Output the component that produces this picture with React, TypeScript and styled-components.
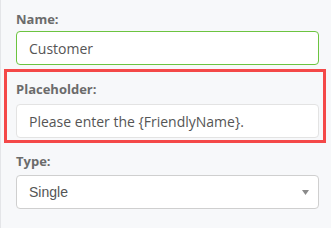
import React from 'react';
import styled, { createGlobalStyle } from 'styled-components';

const GlobalStyle = createGlobalStyle`
    html, body {
        margin: 0;
        padding: 0;
        background: #f7f8fa;
    }
    * {
        box-sizing: border-box;
    }
`;

const Panel = styled.div`
    width: 331px;
    height: 228px;
    padding: 10px 0 0 0;
    border-left: 1px solid #e4e5e8;
    background: #f7f8fa;
    font-family: 'Open Sans', 'Noto Sans', sans-serif;
    display: flex;
    flex-direction: column;
`;

const Field = styled.div<{ $highlight?: boolean; $gap: number; $top: number }>`
    display: flex;
    flex-direction: column;
    gap: ${(props) => props.$gap}px;
    margin-top: ${(props) => props.$top}px;
    margin-left: ${(props) => (props.$highlight ? 3 : 15)}px;
    margin-right: ${(props) => (props.$highlight ? 5 : 12)}px;
    padding: ${(props) => (props.$highlight ? '8px 4px 2px 9px' : '0')};
    border: ${(props) => (props.$highlight ? '3px solid #f44848' : 'none')};
`;

const Label = styled.label`
    font-size: 13px;
    line-height: 18px;
    font-weight: 700;
    color: #6b6b6b;
`;

const TextInput = styled.input<{ $accent?: boolean }>`
    width: 100%;
    height: 34px;
    padding: 0 12px;
    border: 1px solid ${(props) => (props.$accent ? '#6cc440' : '#e3e3e3')};
    border-radius: 4px;
    background: #fff;
    font-family: 'Open Sans', 'Noto Sans', sans-serif;
    font-size: 14px;
    color: #555;
    outline: none;
`;

const SelectWrap = styled.div`
    position: relative;
    width: 100%;
`;

const Select = styled.select`
    width: 100%;
    height: 34px;
    padding: 0 12px;
    border: 1px solid #cfcfcf;
    border-radius: 4px;
    background: #fff;
    font-family: 'Liberation Sans', Arial, sans-serif;
    font-size: 14px;
    color: #555;
    appearance: none;
    outline: none;
`;

const Caret = styled.svg`
    position: absolute;
    right: 10px;
    top: 15px;
    pointer-events: none;
`;

export default function App() {
    return (
        <>
            <GlobalStyle />
            <Panel>
                <Field $gap={3} $top={0}>
                    <Label>Name:</Label>
                    <TextInput $accent defaultValue="Customer" />
                </Field>
                <Field $highlight $gap={6} $top={4}>
                    <Label>Placeholder:</Label>
                    <TextInput defaultValue="Please enter the {FriendlyName}." />
                </Field>
                <Field $gap={5} $top={9}>
                    <Label>Type:</Label>
                    <SelectWrap>
                        <Select defaultValue="Single">
                            <option>Single</option>
                            <option>Multiple</option>
                        </Select>
                        <Caret width="7" height="5" viewBox="0 0 7 5">
                            <path d="M0 0 H7 L3.5 5 Z" fill="#8a8a8a" />
                        </Caret>
                    </SelectWrap>
                </Field>
            </Panel>
        </>
    );
}
